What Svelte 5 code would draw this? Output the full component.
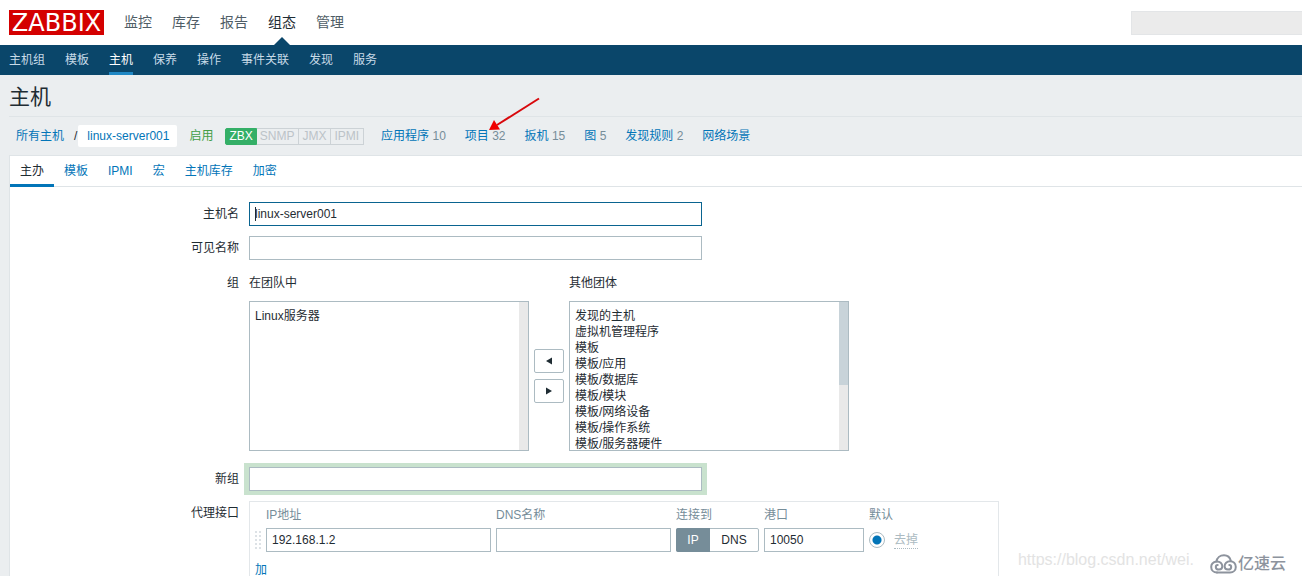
<script>
  const mainMenu = ['监控', '库存', '报告', '组态', '管理'];
  const subMenu = ['主机组', '模板', '主机', '保养', '操作', '事件关联', '发现', '服务'];
  const availability = ['ZBX', 'SNMP', 'JMX', 'IPMI'];
  const hostLinks = [
    { text: '应用程序', count: 10 },
    { text: '项目', count: 32 },
    { text: '扳机', count: 15 },
    { text: '图', count: 5 },
    { text: '发现规则', count: 2 },
    { text: '网络场景', count: null }
  ];
  const tabs = ['主办', '模板', 'IPMI', '宏', '主机库存', '加密'];
  const otherGroups = [
    '发现的主机', '虚拟机管理程序', '模板', '模板/应用', '模板/数据库',
    '模板/模块', '模板/网络设备', '模板/操作系统', '模板/服务器硬件'
  ];
  const dotRows = [1, 5, 9, 13, 17];

  let activeTab = $state('主办');
  let hostName = $state('linux-server001');
  let visibleName = $state('');
  let newGroup = $state('');
  let ip = $state('192.168.1.2');
  let dns = $state('');
  let port = $state('10050');
  let connect = $state('IP');
</script>

<div class="page">
  <header>
    <div class="top">
      <a class="logo" href="#home">ZABBIX</a>
      <nav class="main-menu">
        {#each mainMenu as item}
          <a href="#main" class:active={item === '组态'}>{item}</a>
        {/each}
      </nav>
      <input class="search" type="text" aria-label="搜索" />
    </div>
    <nav class="sub-menu">
      {#each subMenu as item}
        <a href="#sub" class:active={item === '主机'}>{item}</a>
      {/each}
    </nav>
  </header>

  <main>
    <h1>主机</h1>

    <div class="host-nav">
      <div class="crumbs">
        <a href="#hosts">所有主机</a>
        <span class="slash">/</span>
        <a class="current" href="#host">linux-server001</a>
      </div>
      <span class="enabled">启用</span>
      <div class="badges">
        {#each availability as name}
          <span class:on={name === 'ZBX'}>{name}</span>
        {/each}
      </div>
      <div class="links">
        {#each hostLinks as link}
          <span class="link">
            <a href="#link">{link.text}</a>
            {#if link.count !== null}<span class="count">{link.count}</span>{/if}
            {#if link.text === '项目'}
              <svg class="arrow" width="52" height="36" viewBox="0 0 52 36" aria-hidden="true">
                <path d="M51 1.5 9 28" stroke="#d8080c" stroke-width="2" fill="none" />
                <path d="M1 33 6 23 12 32.500Z" fill="#f00000" />
              </svg>
            {/if}
          </span>
        {/each}
      </div>
    </div>

    <section class="panel">
      <div class="tabs" role="tablist">
        {#each tabs as tab}
          <button type="button" role="tab" aria-selected={activeTab === tab} class:active={activeTab === tab} onclick={() => (activeTab = tab)}>{tab}</button>
        {/each}
      </div>

      <form class="form">
        <label class="name" for="host">主机名</label>
        <div class="field">
          <input id="host" class="wide focused" type="text" bind:value={hostName} />
          <span class="caret"></span>
        </div>

        <label class="name" for="visible">可见名称</label>
        <div class="field">
          <input id="visible" class="wide" type="text" bind:value={visibleName} />
        </div>

        <span class="name groups-name">组</span>
        <div class="groups">
          <div class="group">
            <label for="in-groups">在团队中</label>
            <select id="in-groups" multiple>
              <option>Linux服务器</option>
            </select>
          </div>
          <div class="movers">
            <button type="button" aria-label="添加到团队">
              <svg width="8" height="8" viewBox="0 0 8 8"><path d="M7 0.500v7L1 4z" fill="#1f2c33" /></svg>
            </button>
            <button type="button" aria-label="从团队移除">
              <svg width="8" height="8" viewBox="0 0 8 8"><path d="M1 0.500v7L7 4z" fill="#1f2c33" /></svg>
            </button>
          </div>
          <div class="group">
            <label for="other-groups">其他团体</label>
            <select id="other-groups" class="scrolled" multiple>
              {#each otherGroups as group}<option>{group}</option>{/each}
            </select>
          </div>
        </div>

        <label class="name new-name" for="new-group">新组</label>
        <div class="field">
          <div class="glow">
            <input id="new-group" class="wide" type="text" bind:value={newGroup} />
          </div>
        </div>

        <span class="name">代理接口</span>
        <div class="interfaces">
          <table>
            <thead>
              <tr>
                <th class="grip"></th>
                <th>IP地址</th>
                <th>DNS名称</th>
                <th>连接到</th>
                <th>港口</th>
                <th colspan="2">默认</th>
              </tr>
            </thead>
            <tbody>
              <tr>
                <td class="grip">
                  <svg width="7" height="20" viewBox="0 0 7 20" fill="#dde2e6" aria-hidden="true">
                    {#each dotRows as y}
                      <rect x="0" {y} width="2" height="2" />
                      <rect x="4" {y} width="2" height="2" />
                    {/each}
                  </svg>
                </td>
                <td><input class="ip" type="text" aria-label="IP地址" bind:value={ip} /></td>
                <td><input class="dns" type="text" aria-label="DNS名称" bind:value={dns} /></td>
                <td>
                  <div class="segmented">
                    <label class:chosen={connect === 'IP'}><input type="radio" name="connect" value="IP" bind:group={connect} />IP</label>
                    <label class:chosen={connect === 'DNS'}><input type="radio" name="connect" value="DNS" bind:group={connect} />DNS</label>
                  </div>
                </td>
                <td><input class="port" type="text" aria-label="港口" bind:value={port} /></td>
                <td><input class="default" type="radio" name="default" aria-label="默认" checked /></td>
                <td><button class="remove" type="button" disabled>去掉</button></td>
              </tr>
            </tbody>
          </table>
          <button class="add" type="button">加</button>
        </div>
      </form>
    </section>
  </main>

  <div class="watermark">
    <span class="url">https://blog.csdn.net/wei.</span>
    <span class="brand">
      <svg width="27" height="20" viewBox="0 0 27 20" fill="none" stroke="#8d939d" stroke-width="2" stroke-linecap="round" aria-hidden="true">
        <path d="M7 18.500C3.500 18.500 1.200 16 1.200 13S3.500 8 6.500 7.500C7 4 10 1.300 14 1.300C17.500 1.300 20 3.500 20.800 6.800" />
        <path d="M7 18.500H20C23.500 18.500 25.800 16 25.800 13C25.800 9.500 23.300 7.200 20 7.200C16.800 7.200 14.600 9.800 14.600 12.300C14.600 14.500 16.200 15.500 18 15.500C20 15.500 21.200 14.300 21.200 12.900C21.200 11.600 20.300 11 19.300 11" />
        <path d="M6.500 7.500C10 7.200 12.300 9.800 12.300 12.300C12.300 14.400 10.800 15.500 9 15.500C7 15.500 5.800 14.300 5.800 12.900C5.800 11.600 6.700 11 7.700 11" />
      </svg>
      亿速云
    </span>
  </div>
</div>

<style>
  :global(body) {
    background: #ebeef0;
  }

  .page {
    position: relative;
    display: flex;
    flex-direction: column;
    min-height: 100vh;
    overflow: hidden;
    font: 12px/16px 'Liberation Sans', 'Noto Sans CJK SC', sans-serif;
    color: #1f2c33;
  }

  .page * {
    box-sizing: border-box;
  }

  a {
    color: #0275b8;
    text-decoration: none;
  }

  button,
  input,
  select {
    margin: 0;
    font: inherit;
    color: inherit;
  }

  .top {
    display: flex;
    align-items: center;
    height: 45px;
    padding-left: 9px;
    background: #fff;
  }

  .logo {
    width: 95px;
    height: 25px;
    background: #d40000;
    color: #fff;
    font: 24px/27px 'DejaVu Sans', sans-serif;
    text-align: center;
  }

  .main-menu {
    display: flex;
    gap: 20px;
    margin-left: 20px;
    font-size: 14px;
    line-height: 45px;
  }

  .main-menu a {
    position: relative;
    color: #4f5d66;
  }

  .main-menu a.active {
    color: #1f2c33;
  }

  .main-menu a.active::after {
    content: '';
    position: absolute;
    bottom: 0;
    left: 6px;
    border: solid transparent;
    border-width: 0 8px 8px;
    border-bottom-color: #0a466a;
  }

  .search {
    width: 171px;
    height: 24px;
    margin-left: auto;
    border: 1px solid #e3e5e7;
    border-right: 0;
    background: #ebebeb;
  }

  .sub-menu {
    display: flex;
    gap: 20px;
    height: 30px;
    padding-left: 9px;
    background: #0a466a;
    line-height: 30px;
  }

  .sub-menu a {
    color: #c8dbe8;
  }

  .sub-menu a.active {
    border-bottom: 3px solid #1f87c4;
    color: #fff;
  }

  main {
    display: flex;
    flex: 1;
    flex-direction: column;
    padding-left: 9px;
  }

  h1 {
    margin: 0;
    padding-top: 3px;
    border-bottom: 1px solid #dfe4e7;
    font-size: 21px;
    font-weight: 400;
    line-height: 38px;
  }

  .host-nav {
    display: flex;
    align-items: center;
    height: 38px;
    padding-left: 7px;
  }

  .crumbs {
    display: flex;
    align-items: center;
  }

  .slash {
    margin: 0 1px 0 10px;
  }

  .current {
    padding: 3px 8px 3px 9px;
    border-radius: 2px;
    background: #fff;
  }

  .enabled {
    margin: 0 12px;
    color: #429e47;
  }

  .badges {
    display: flex;
  }

  .badges span {
    height: 17px;
    padding: 0 4px 0 3px;
    border: 1px solid #ccd2d6;
    border-left-width: 0;
    color: #bcc3c8;
    line-height: 15px;
  }

  .badges span.on {
    padding-right: 3px;
    border-color: #34af67;
    border-left-width: 1px;
    border-radius: 2px 0 0 2px;
    background: #34af67;
    color: #fff;
  }

  .links {
    display: flex;
    gap: 19px;
    margin-left: 17px;
  }

  .link {
    position: relative;
    white-space: nowrap;
  }

  .count {
    color: #768d99;
  }

  .arrow {
    position: absolute;
    top: -31px;
    left: 23px;
  }

  .panel {
    flex: 1;
    border: 1px solid #dfe4e7;
    border-width: 1px 0 0 1px;
    background: #fff;
  }

  .tabs {
    display: flex;
    height: 31px;
    border-bottom: 1px solid #dfe4e7;
  }

  .tabs button {
    height: 31px;
    padding: 1px 10px 0;
    border: 0;
    border-bottom: 3px solid transparent;
    background: none;
    color: #0275b8;
    line-height: 24px;
  }

  .tabs button.active {
    border-bottom-color: #0275b8;
    color: #1f2c33;
  }

  .form {
    display: grid;
    grid-template-columns: 229px 1fr;
    column-gap: 10px;
    row-gap: 10px;
    padding-top: 15px;
  }

  .name {
    text-align: right;
    line-height: 24px;
  }

  .groups-name {
    line-height: 26px;
  }

  .new-name {
    padding-top: 6px;
  }

  .field {
    position: relative;
  }

  input[type='text'] {
    display: block;
    height: 24px;
    padding: 0 5px;
    border-radius: 0;
    outline: 0;
  }

  .form input[type='text'] {
    border: 1px solid #acbbc2;
    background: #fff;
  }

  .form .wide {
    width: 453px;
  }

  .form input[type='text'].focused {
    border-color: #0a6490;
  }

  .caret {
    position: absolute;
    top: 5px;
    left: 6px;
    width: 1px;
    height: 14px;
    background: #1f2c33;
  }

  .groups {
    display: flex;
    gap: 5px;
  }

  .group label {
    display: block;
    margin-bottom: 5px;
    line-height: 26px;
  }

  .group select {
    display: block;
    width: 280px;
    height: 150px;
    padding: 4px 5px 0;
    border: 1px solid #acbbc2;
    border-radius: 0;
    outline: 0;
    background: linear-gradient(#e9e9e9, #e9e9e9) right / 9px 100% no-repeat #fff;
    scrollbar-width: none;
  }

  .group .scrolled {
    background:
      linear-gradient(#c8d3d9, #c8d3d9) right top / 9px 83px no-repeat,
      linear-gradient(#e9e9e9, #e9e9e9) right / 9px 100% no-repeat #fff;
  }

  .group option {
    display: flex;
    align-items: center;
    height: 16px;
    min-height: 0;
    padding: 0;
    line-height: 16px;
  }

  .movers {
    display: flex;
    flex-direction: column;
    gap: 6px;
    padding-top: 79px;
  }

  .movers button {
    display: flex;
    align-items: center;
    justify-content: center;
    width: 30px;
    height: 24px;
    padding: 0;
    border: 1px solid #acbbc2;
    border-radius: 2px;
    background: #fff;
  }

  .glow {
    width: max-content;
    margin: 2px -5px -4px;
    padding: 4px 5px;
    background: #c9e2ce;
  }

  .interfaces {
    width: 750px;
    padding: 0 5px;
    border: 1px solid #e3e7ea;
    border-bottom: 0;
  }

  table {
    border-collapse: collapse;
  }

  th {
    height: 26px;
    padding: 0;
    color: #768d99;
    font-weight: 400;
    text-align: left;
  }

  td {
    padding: 0 5px 0 0;
  }

  .grip {
    width: 11px;
    padding: 0;
  }

  .grip svg {
    display: block;
  }

  .ip {
    width: 225px;
  }

  .dns {
    width: 175px;
  }

  .port {
    width: 100px;
  }

  .segmented {
    display: flex;
    width: 83px;
    height: 24px;
    border: 1px solid #acbbc2;
    border-radius: 2px;
    line-height: 22px;
  }

  .segmented label {
    flex: 1 1 auto;
    text-align: center;
  }

  .segmented .chosen {
    margin: -1px 0 -1px -1px;
    border-radius: 2px 0 0 2px;
    background: #768d99;
    color: #fff;
    line-height: 24px;
  }

  .segmented input {
    position: absolute;
    opacity: 0;
    pointer-events: none;
  }

  .default {
    display: block;
    width: 16px;
    height: 16px;
    margin-right: 4px;
    border: 1px solid #acbbc2;
    border-radius: 50%;
    background: #fff;
    appearance: none;
  }

  .default:checked {
    background: radial-gradient(circle, #0275b8 4px, #fff 5px);
  }

  .remove {
    padding: 0;
    border: 0;
    border-bottom: 1px dotted #acbbc2;
    background: none;
    color: #acbbc2;
    line-height: 15px;
  }

  .add {
    margin-top: 8px;
    padding: 0;
    border: 0;
    background: none;
    color: #0275b8;
    line-height: 20px;
  }

  .watermark {
    position: absolute;
    right: 16px;
    bottom: 2px;
    display: flex;
    align-items: center;
    gap: 16px;
    font-size: 16px;
    line-height: 20px;
  }

  .url {
    padding-bottom: 8px;
    color: #e3e3e3;
  }

  .brand {
    display: flex;
    align-items: center;
    gap: 1px;
    color: #8d939d;
    font-weight: 500;
  }
</style>
